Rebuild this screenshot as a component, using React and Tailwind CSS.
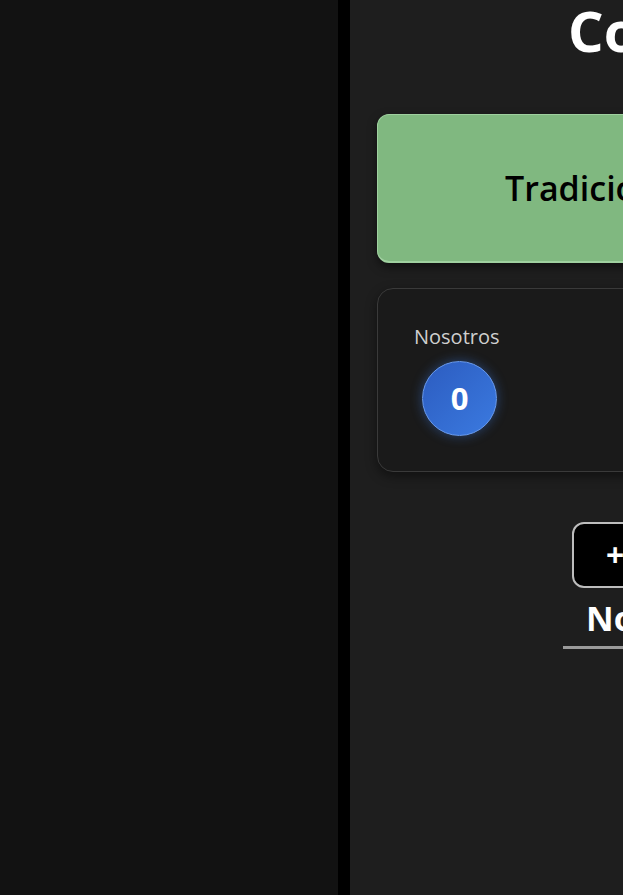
export default function App() {
  return (
    <div className="flex h-screen w-full overflow-hidden bg-[#121212]" style={{ fontFamily: '"Open Sans", "Noto Sans", sans-serif' }}>
      <div className="w-[338px] shrink-0 bg-[#121212]" />
      <div className="w-[12px] shrink-0 bg-black" />
      <div className="min-w-0 flex-1 overflow-hidden bg-[#1e1e1e]">
        <div className="flex w-[700px] flex-col pl-[27px]">
          <h1 className="ml-[191px] mt-[2px] whitespace-nowrap text-[56px] font-bold leading-none text-white">Contador</h1>
          <div className="mt-[56px] flex h-[149px] w-[442px] items-center rounded-[12px] border border-b-2 border-[#9fd09f] bg-[#80b880] pl-[127px] shadow-[0_4px_10px_rgba(0,0,0,0.5)]">
            <span className="whitespace-nowrap text-[34px] font-semibold text-black">Tradicional</span>
          </div>
          <div className="mt-[25px] flex h-[184px] w-[442px] flex-col rounded-[16px] border border-[#3a3a3a] bg-[#1a1a1a] pl-[36px] pt-[36px] shadow-[0_4px_12px_rgba(0,0,0,0.45)]">
            <span className="text-[20px] leading-[24px] text-[#cfcfcf]">Nosotros</span>
            <div className="ml-[8px] mt-[12px] flex h-[75px] w-[75px] items-center justify-center rounded-full border border-[#6a9cf0] bg-gradient-to-br from-[#2c5cc0] to-[#3b7ae0] shadow-[0_0_12px_rgba(59,122,224,0.45)]">
              <span className="text-[31px] font-bold text-white">0</span>
            </div>
          </div>
          <div className="ml-[195px] mt-[50px] flex h-[66px] w-[200px] items-center rounded-[12px] border-2 border-[#bdbdbd] bg-black pl-[32px]">
            <span className="text-[32px] font-bold leading-none text-white">+ Agregar</span>
          </div>
          <div className="ml-[186px] mt-[9px] w-[200px] border-b-[3px] border-[#9a9a9a] pb-[7px] pl-[23px]">
            <span className="whitespace-nowrap text-[34px] font-bold leading-[42px] text-white">Nosotros</span>
          </div>
        </div>
      </div>
    </div>
  );
}
